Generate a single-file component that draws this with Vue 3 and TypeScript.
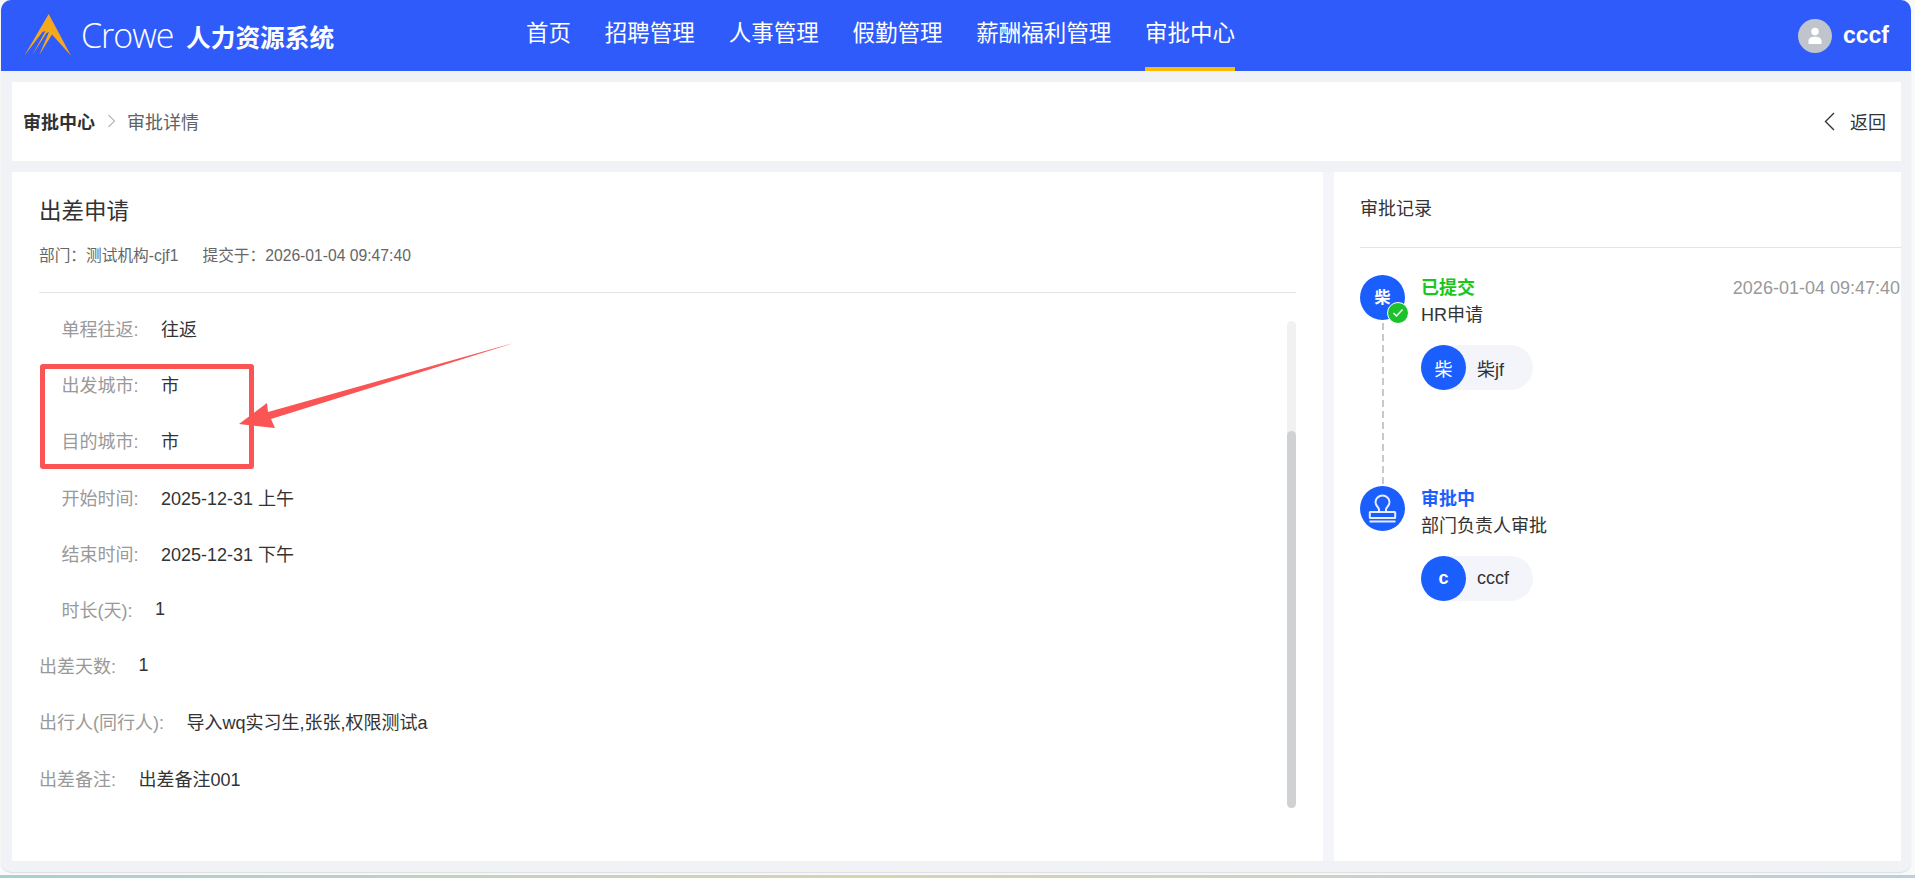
<script setup lang="ts">
interface Row { label: string; value: string; indent: boolean }
const navItems: string[] = ['首页', '招聘管理', '人事管理', '假勤管理', '薪酬福利管理', '审批中心']
const rows: Row[] = [
  { label: '单程往返:', value: '往返', indent: true },
  { label: '出发城市:', value: '市', indent: true },
  { label: '目的城市:', value: '市', indent: true },
  { label: '开始时间:', value: '2025-12-31 上午', indent: true },
  { label: '结束时间:', value: '2025-12-31 下午', indent: true },
  { label: '时长(天):', value: '1', indent: true },
  { label: '出差天数:', value: '1', indent: false },
  { label: '出行人(同行人):', value: '导入wq实习生,张张,权限测试a', indent: false },
  { label: '出差备注:', value: '出差备注001', indent: false }
]
</script>

<template>
  <div class="screen">
    <div class="window">
      <header class="topbar">
        <svg class="logo" width="48" height="42" viewBox="24 14 48 42">
          <polygon fill="#f5a81c" points="48.7,14 71,55.7 52,34.5 39,55.5 49,32 46.5,33 32,55.5 45.5,31 42.5,32 24.3,55.7" />
        </svg>
        <span class="crowe">Crowe</span>
        <span class="system">人力资源系统</span>
        <nav class="nav">
          <a v-for="(n, i) in navItems" :key="n" class="nav-item" :class="{ active: i === navItems.length - 1 }">{{ n }}</a>
        </nav>
        <div class="user">
          <span class="user-avatar">
            <svg width="16" height="18" viewBox="0 0 16 18">
              <circle cx="8" cy="4.6" r="3.8" fill="#fff" />
              <path d="M1.5 17v-3.2c0-2.4 2.2-4 6.5-4s6.5 1.6 6.5 4V17z" fill="#fff" />
            </svg>
          </span>
          <span class="user-name">cccf</span>
        </div>
      </header>

      <main class="content">
        <section class="crumbs">
          <span class="crumb-root">审批中心</span>
          <svg class="crumb-sep" width="9" height="14" viewBox="0 0 9 14">
            <path d="M1.5 1l6 6-6 6" fill="none" stroke="#b4b6ba" stroke-width="1.1" />
          </svg>
          <span class="crumb-leaf">审批详情</span>
          <a class="back">
            <svg class="back-icon" width="11" height="19" viewBox="0 0 11 19">
              <path d="M10 1L1.500 9.500 10 18" fill="none" stroke="#333" stroke-width="1.400" />
            </svg>
            <span>返回</span>
          </a>
        </section>

        <section class="panels">
          <article class="detail">
            <h1 class="detail-title">出差申请</h1>
            <p class="meta"><span>部门：测试机构-cjf1</span><span>提交于：2026-01-04 09:47:40</span></p>
            <div class="rows">
              <div v-for="r in rows" :key="r.label" class="row" :class="{ indent: r.indent }">
                <span class="row-label">{{ r.label }}</span>
                <span class="row-value">{{ r.value }}</span>
              </div>
            </div>
            <div class="scroll-track"><div class="scroll-thumb"></div></div>
            <div class="mark-box"></div>
            <svg class="mark-arrow" width="290" height="100" viewBox="230 335 290 100">
              <polygon fill="#fb5454" points="514,343 268,412 267,403 239,424 275,428 271,419" />
            </svg>
          </article>

          <aside class="records">
            <h2 class="records-title">审批记录</h2>
            <div class="timeline">
              <div class="dash"></div>
              <div class="step">
                <div class="step-avatar">
                  <span class="step-initial">柴</span>
                  <span class="badge">
                    <svg width="12" height="10" viewBox="0 0 12 10">
                      <path d="M1.500 5l3 3 6-6.500" fill="none" stroke="#fff" stroke-width="1.500" />
                    </svg>
                  </span>
                </div>
                <div class="step-body">
                  <div class="step-head">
                    <span class="status done">已提交</span>
                    <span class="time">2026-01-04 09:47:40</span>
                  </div>
                  <div class="step-name">HR申请</div>
                  <div class="pill"><span class="pill-avatar">柴</span><span class="pill-name">柴jf</span></div>
                </div>
              </div>
              <div class="step">
                <div class="step-avatar">
                  <svg width="45" height="45" viewBox="0 0 45 45">
                    <g fill="none" stroke="#e6edff" stroke-width="2">
                      <path d="M19 26v-2.500c0-2.300-3.500-3.200-3.500-7.500a7 6.500 0 0 1 14 0c0 4.300-3.500 5.200-3.500 7.500V26" />
                      <rect x="9.800" y="26" width="25.400" height="6" rx="0.500" />
                      <path d="M9.500 35.500h26" />
                    </g>
                  </svg>
                </div>
                <div class="step-body">
                  <div class="step-head"><span class="status doing">审批中</span></div>
                  <div class="step-name">部门负责人审批</div>
                  <div class="pill"><span class="pill-avatar latin">c</span><span class="pill-name">cccf</span></div>
                </div>
              </div>
            </div>
          </aside>
        </section>
      </main>
    </div>
    <div class="taskbar"></div>
  </div>
</template>

<style>
html, body { margin: 0; padding: 0; overflow: hidden; }
</style>

<style scoped>
.screen {
  width: 1915px;
  height: 878px;
  position: relative;
  overflow: hidden;
  background: #f8f9f9;
  font-family: "Liberation Sans", "Noto Sans CJK SC", sans-serif;
  color: #333;
}
.window {
  width: 1910px;
  height: 872px;
  margin-left: 1px;
  display: flex;
  flex-direction: column;
  background: #f0f2f5;
  border-radius: 10px;
  overflow: hidden;
  box-shadow: 0 1px 1px #dcdee0;
}
.topbar {
  height: 71px;
  flex: none;
  display: flex;
  align-items: center;
  background: #2f5bfa;
  padding: 0 22px 0 23px;
  color: #fff;
}
.logo { flex: none; margin-top: -1px; }
.crowe {
  margin-left: 9px;
  width: 91px;
  font-family: "Open Sans", "Liberation Sans", sans-serif;
  font-weight: 300;
  font-size: 34px;
  letter-spacing: -1px;
  line-height: 71px;
}
.system {
  margin-left: 14px;
  width: 148px;
  font-size: 24.700px;
  font-weight: 700;
  white-space: nowrap;
}
.nav {
  align-self: stretch;
  margin-left: 192px;
  display: flex;
  gap: 33.800px;
}
.nav-item {
  display: flex;
  align-items: center;
  padding-bottom: 5px;
  box-sizing: border-box;
  border-bottom: 4px solid transparent;
  font-size: 22.500px;
  white-space: nowrap;
}
.nav-item.active { border-bottom-color: #f9bb08; }
.user {
  margin-left: auto;
  display: flex;
  align-items: center;
  gap: 11px;
}
.user-avatar {
  width: 34px;
  height: 34px;
  border-radius: 50%;
  background: #c0c4cc;
  display: flex;
  align-items: center;
  justify-content: center;
}
.user-name { font-size: 23px; font-weight: 700; }
.content {
  flex: 1;
  min-height: 0;
  display: flex;
  flex-direction: column;
  gap: 11px;
  padding: 11px 10px 11px 11px;
}
.crumbs {
  height: 79px;
  flex: none;
  box-sizing: border-box;
  display: flex;
  align-items: center;
  background: #fff;
  padding: 0 15px 2px 11px;
  font-size: 18px;
}
.crumb-root { font-weight: 700; color: #303133; }
.crumb-sep { margin: 0 11px 0 12px; }
.crumb-leaf { color: #606266; }
.back {
  margin-left: auto;
  display: flex;
  align-items: center;
  gap: 15px;
  font-size: 18px;
  color: #333;
}
.back-icon { margin-top: 1px; }
.panels {
  flex: 1;
  min-height: 0;
  display: flex;
  gap: 11px;
  background: #f4f5fb;
}
.detail {
  width: 1311px;
  flex: none;
  position: relative;
  background: #fff;
  box-sizing: border-box;
  padding: 25px 27px 0 27px;
}
.detail-title {
  margin: 0;
  font-size: 22.500px;
  line-height: 30px;
  font-weight: 400;
  color: #333;
}
.meta {
  margin: 19px 0 0;
  height: 47px;
  box-sizing: border-box;
  line-height: 20px;
  font-size: 15.700px;
  color: #666;
  display: flex;
  gap: 24px;
  border-bottom: 1px solid #e3e4e9;
}
.rows { padding-top: 7px; }
.row {
  height: 56.200px;
  display: flex;
  align-items: center;
  font-size: 18px;
  white-space: nowrap;
}
.row.indent { padding-left: 22.500px; }
.row-label { color: #999; margin-right: 22.500px; }
.row-value { color: #333; }
.scroll-track {
  position: absolute;
  left: 1275px;
  top: 149px;
  width: 9px;
  height: 487px;
  border-radius: 5px;
  background: #f1f1f1;
}
.scroll-thumb {
  position: absolute;
  left: 0;
  right: 0;
  top: 110px;
  bottom: 0;
  border-radius: 5px;
  background: #d0d1d3;
}
.mark-box {
  position: absolute;
  left: 28px;
  top: 192px;
  width: 214px;
  height: 105px;
  box-sizing: border-box;
  border: 5px solid #fb5454;
  border-radius: 3px;
}
.mark-arrow {
  position: absolute;
  left: 218px;
  top: 163px;
}
.records {
  flex: 1;
  min-width: 0;
  background: #fff;
  padding: 24px 0 0 26px;
}
.records-title {
  margin: 0;
  height: 51px;
  line-height: 26px;
  font-size: 18px;
  font-weight: 400;
  color: #333;
  border-bottom: 1px solid #e3e4e9;
}
.timeline {
  position: relative;
  padding-top: 27px;
}
.dash {
  position: absolute;
  left: 22px;
  top: 75px;
  width: 2px;
  height: 164px;
  background: repeating-linear-gradient(180deg, #c8c9cc 0 7px, transparent 7px 11px);
}
.step {
  position: relative;
  height: 211px;
  display: flex;
  gap: 16px;
}
.step-avatar {
  position: relative;
  flex: none;
  width: 45px;
  height: 45px;
  border-radius: 50%;
  background: #1b5efe;
  color: #fff;
  font-size: 16px;
  font-weight: 700;
  display: flex;
  align-items: center;
  justify-content: center;
}
.step-initial { margin-bottom: 4px; }
.badge {
  position: absolute;
  left: 27px;
  top: 27px;
  width: 20px;
  height: 20px;
  border: 1.500px solid #fff;
  border-radius: 50%;
  background: #1cc22c;
  display: flex;
  align-items: center;
  justify-content: center;
}
.step-body { flex: 1; min-width: 0; padding-top: 1px; }
.step-head {
  height: 24px;
  display: flex;
  align-items: center;
  justify-content: space-between;
}
.status { font-size: 18px; font-weight: 700; margin-top: -4px; }
.status.done { color: #1cc51c; }
.status.doing { color: #1b5efe; }
.time { font-size: 18px; color: #999; margin-right: 1px; }
.step-name {
  margin-top: 2px;
  font-size: 18px;
  line-height: 26px;
  color: #333;
}
.pill {
  margin-top: 17px;
  width: 112px;
  height: 45px;
  border-radius: 23px;
  background: #f4f5fb;
  display: flex;
  align-items: center;
  font-size: 18px;
}
.pill-avatar {
  width: 45px;
  height: 45px;
  border-radius: 50%;
  background: #1b5efe;
  color: #fff;
  display: flex;
  align-items: center;
  justify-content: center;
  font-size: 18px;
}
.pill-avatar.latin { font-weight: 700; }
.pill-name { margin-left: 11px; color: #333; }
.taskbar {
  position: absolute;
  left: 0;
  right: 0;
  bottom: 0;
  height: 3px;
  background: linear-gradient(90deg, #a8cfd0, #d9d3b0 45%, #b8cfe0);
}
</style>
